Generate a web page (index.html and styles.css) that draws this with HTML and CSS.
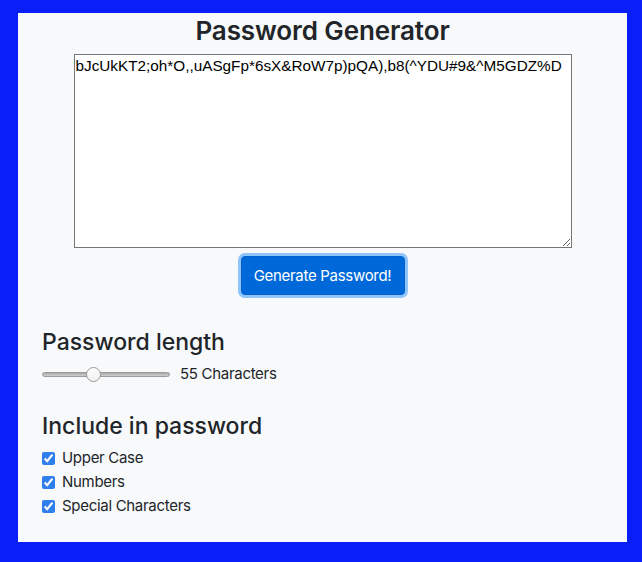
FILE: index.html
```html
<!DOCTYPE html>
<html lang="en">
<head>
<meta charset="utf-8">
<title>Password Generator</title>
<link rel="stylesheet" href="styles.css">
</head>
<body>
<main class="panel">
  <h1 class="title">Password Generator</h1>
  <div class="output">
    <textarea class="password" readonly>bJcUkKT2;oh*O,,uASgFp*6sX&amp;RoW7p)pQA),b8(^YDU#9&amp;^M5GDZ%D</textarea>
  </div>
  <div class="actions">
    <button class="btn" type="button">Generate Password!</button>
  </div>
  <section class="group">
    <h2 class="heading">Password length</h2>
    <div class="length-row">
      <input class="slider" type="range" min="8" max="128" value="55">
      <span class="length-label">55 Characters</span>
    </div>
  </section>
  <section class="group">
    <h2 class="heading">Include in password</h2>
    <label class="check"><input type="checkbox" checked> <span>Upper Case</span></label>
    <label class="check"><input type="checkbox" checked> <span>Numbers</span></label>
    <label class="check"><input type="checkbox" checked> <span>Special Characters</span></label>
  </section>
</main>
</body>
</html>
```
FILE: styles.css
```css
* { box-sizing: border-box; }
html, body { margin: 0; }
body {
  background: #0a1ff7;
  padding: 13px 15px 20px 18px;
  font-family: Inter, "Noto Sans", sans-serif;
  color: #212529;
}
.panel {
  background: #f8f9fa;
  height: 529px;
  padding: 0 24px;
}
.title {
  margin: 0;
  padding-top: 2px;
  text-align: center;
  font-size: 26px;
  font-weight: 600;
  line-height: 32px;
  letter-spacing: -0.1px;
}
.output {
  display: flex;
  justify-content: center;
  margin-top: 7px;
}
.password {
  width: 498px;
  height: 194px;
  border: 1px solid #767676;
  padding: 2px 1px;
  font-family: "Liberation Sans", Arial, sans-serif;
  font-size: 15.3px;
  line-height: 18px;
  color: #000;
  background: #fff;
  resize: both;
}
.actions {
  display: flex;
  justify-content: center;
  margin-top: 5px;
}
.btn {
  width: 164px;
  height: 39px;
  margin-top: 3px;
  border: 1px solid #0062cc;
  border-radius: 4px;
  background: #0069d9;
  color: #fff;
  font-family: Inter, "Noto Sans", sans-serif;
  font-size: 15px;
  letter-spacing: -0.3px;
  box-shadow: 0 0 0 3px rgba(38, 143, 255, 0.5);
}
.group { margin-top: 33px; }
.heading {
  margin: 0;
  font-size: 23px;
  font-weight: 500;
  line-height: 28px;
}
.length-row {
  display: flex;
  align-items: center;
  gap: 10px;
  margin-top: 6px;
}
.slider {
  -webkit-appearance: none;
  appearance: none;
  width: 128px;
  height: 5px;
  margin: 0;
  border-radius: 3px;
  background: linear-gradient(#a9a9a9, #cfcfcf);
  border: 1px solid #9b9b9b;
}
.slider::-webkit-slider-thumb {
  -webkit-appearance: none;
  width: 15px;
  height: 15px;
  border-radius: 50%;
  background: linear-gradient(#ffffff, #f0f0f0);
  border: 1px solid #9a9a9a;
}
.length-label { font-size: 15px; line-height: 24px; letter-spacing: -0.3px; }
.group + .group { margin-top: 26px; }
.group + .group .heading { margin-bottom: 6px; }
.check {
  display: flex;
  align-items: center;
  gap: 7px;
  font-size: 15px;
  line-height: 24px;
  letter-spacing: -0.3px;
}
.check input {
  width: 13px;
  height: 13px;
  margin: 0;
  accent-color: #2f80ed;
}
```
